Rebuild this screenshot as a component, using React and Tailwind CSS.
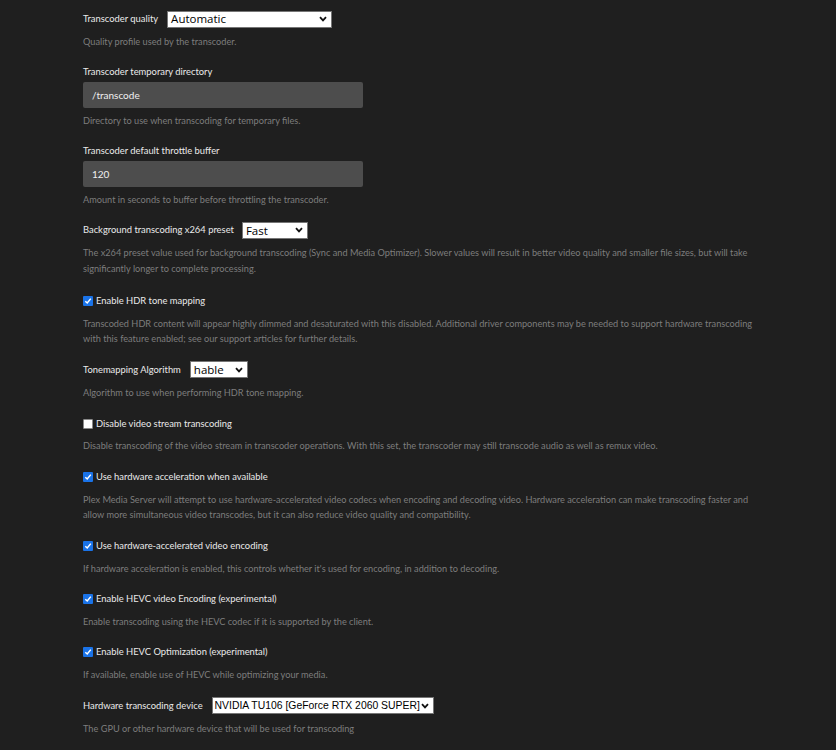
import React from "react";

const font = { fontFamily: "Lato, 'Open Sans', sans-serif" };

function Chevron() {
  return (
    <svg
      className="pointer-events-none absolute right-[5px] top-1/2 -translate-y-1/2"
      width="8"
      height="6"
      viewBox="0 0 8 6"
    >
      <path d="M1 1.2 L4 4.4 L7 1.2" fill="none" stroke="#111" strokeWidth="1.8" />
    </svg>
  );
}

function Select({ value, width }) {
  return (
    <div className="relative h-[17px] shrink-0" style={{ width }}>
      <div className="flex h-full w-full items-center overflow-hidden whitespace-nowrap border border-[#767676] bg-white pl-[3px] text-[11.5px] leading-none text-black font-['Open_Sans',sans-serif]">
        {value}
      </div>
      <Chevron />
    </div>
  );
}

function Desc({ children }) {
  return (
    <p className="mt-[6.25px] whitespace-nowrap text-[9.2px] leading-[15.5px] text-[#7d7d7d]">{children}</p>
  );
}

function SelectRow({ label, value, width, desc, gap = "gap-[9px]", mb = "mb-[15px]", valueClass }) {
  return (
    <div className={mb}>
      <div className={`flex h-[17px] items-center ${gap}`}>
        <span className="text-[9.4px] text-[#eaeaea]">{label}</span>
        {valueClass ? (
          <div className="relative h-[17px] shrink-0" style={{ width }}>
            <div className={valueClass}>{value}</div>
            <Chevron />
          </div>
        ) : (
          <Select value={value} width={width} />
        )}
      </div>
      <Desc>{desc}</Desc>
    </div>
  );
}

function InputRow({ label, value, desc }) {
  return (
    <div className="mb-[14.5px]">
      <div className="h-[15px] text-[9.4px] leading-[15px] text-[#eaeaea]">{label}</div>
      <div className="mt-[3.5px] flex h-[26px] w-[280px] items-center rounded-[2px] bg-[#4d4d4d] px-[9px] text-[10px] text-[#f0f0f0]">
        {value}
      </div>
      <p className="mt-[4.5px] text-[9.2px] leading-[15.5px] text-[#7d7d7d]">{desc}</p>
    </div>
  );
}

function CheckRow({ label, checked, desc }) {
  return (
    <div className="mb-[14.6px]">
      <div className="flex h-[17px] items-center gap-[3px]">
        {checked ? (
          <span className="flex h-[10px] w-[10px] items-center justify-center rounded-[1px] bg-[#1a73e8]">
            <svg width="8" height="8" viewBox="0 0 8 8">
              <path d="M1.3 4.2 L3.2 6 L6.8 1.6" fill="none" stroke="#fff" strokeWidth="1.5" />
            </svg>
          </span>
        ) : (
          <span className="h-[10px] w-[10px] rounded-[1px] border border-[#8a8a8a] bg-white" />
        )}
        <span className="text-[9.4px] text-[#eaeaea]">{label}</span>
      </div>
      <Desc>{desc}</Desc>
    </div>
  );
}

export default function App() {
  return (
    <div className="flex h-[750px] w-full flex-col overflow-hidden bg-[#1f1f1f]" style={font}>
      <div className="flex-1 pl-[83px] pr-[70px] pt-[10.5px]">
        <SelectRow
          label="Transcoder quality"
          value="Automatic"
          width={165}
          mb="mb-[14.5px]"
          desc="Quality profile used by the transcoder."
        />
        <InputRow
          label="Transcoder temporary directory"
          value="/transcode"
          desc="Directory to use when transcoding for temporary files."
        />
        <InputRow
          label="Transcoder default throttle buffer"
          value="120"
          desc="Amount in seconds to buffer before throttling the transcoder."
        />
        <SelectRow
          label="Background transcoding x264 preset"
          value="Fast"
          width={66}
          gap="gap-[8px]"
          mb="mb-[16.5px]"
          desc={
            <>
              The x264 preset value used for background transcoding (Sync and Media Optimizer). Slower values will result in better video quality and smaller file sizes, but will take
              <br />
              significantly longer to complete processing.
            </>
          }
        />
        <CheckRow
          label="Enable HDR tone mapping"
          checked
          desc={
            <>
              Transcoded HDR content will appear highly dimmed and desaturated with this disabled. Additional driver components may be needed to support hardware transcoding
              <br />
              with this feature enabled; see our support articles for further details.
            </>
          }
        />
        <SelectRow
          label="Tonemapping Algorithm"
          value="hable"
          width={58}
          desc="Algorithm to use when performing HDR tone mapping."
        />
        <CheckRow
          label="Disable video stream transcoding"
          checked={false}
          desc="Disable transcoding of the video stream in transcoder operations. With this set, the transcoder may still transcode audio as well as remux video."
        />
        <CheckRow
          label="Use hardware acceleration when available"
          checked
          desc={
            <>
              Plex Media Server will attempt to use hardware-accelerated video codecs when encoding and decoding video. Hardware acceleration can make transcoding faster and
              <br />
              allow more simultaneous video transcodes, but it can also reduce video quality and compatibility.
            </>
          }
        />
        <CheckRow
          label="Use hardware-accelerated video encoding"
          checked
          desc="If hardware acceleration is enabled, this controls whether it's used for encoding, in addition to decoding."
        />
        <CheckRow
          label="Enable HEVC video Encoding (experimental)"
          checked
          desc="Enable transcoding using the HEVC codec if it is supported by the client."
        />
        <CheckRow
          label="Enable HEVC Optimization (experimental)"
          checked
          desc="If available, enable use of HEVC while optimizing your media."
        />
        <SelectRow
          label="Hardware transcoding device"
          value="NVIDIA TU106 [GeForce RTX 2060 SUPER]"
          width={222}
          valueClass="flex h-full w-full items-center overflow-hidden whitespace-nowrap border border-[#767676] bg-white pl-[2px] text-[10.4px] leading-none text-black font-['Liberation_Sans',sans-serif]"
          desc="The GPU or other hardware device that will be used for transcoding"
        />
      </div>
      <div className="h-[3px] shrink-0 bg-[#141414]" />
    </div>
  );
}
